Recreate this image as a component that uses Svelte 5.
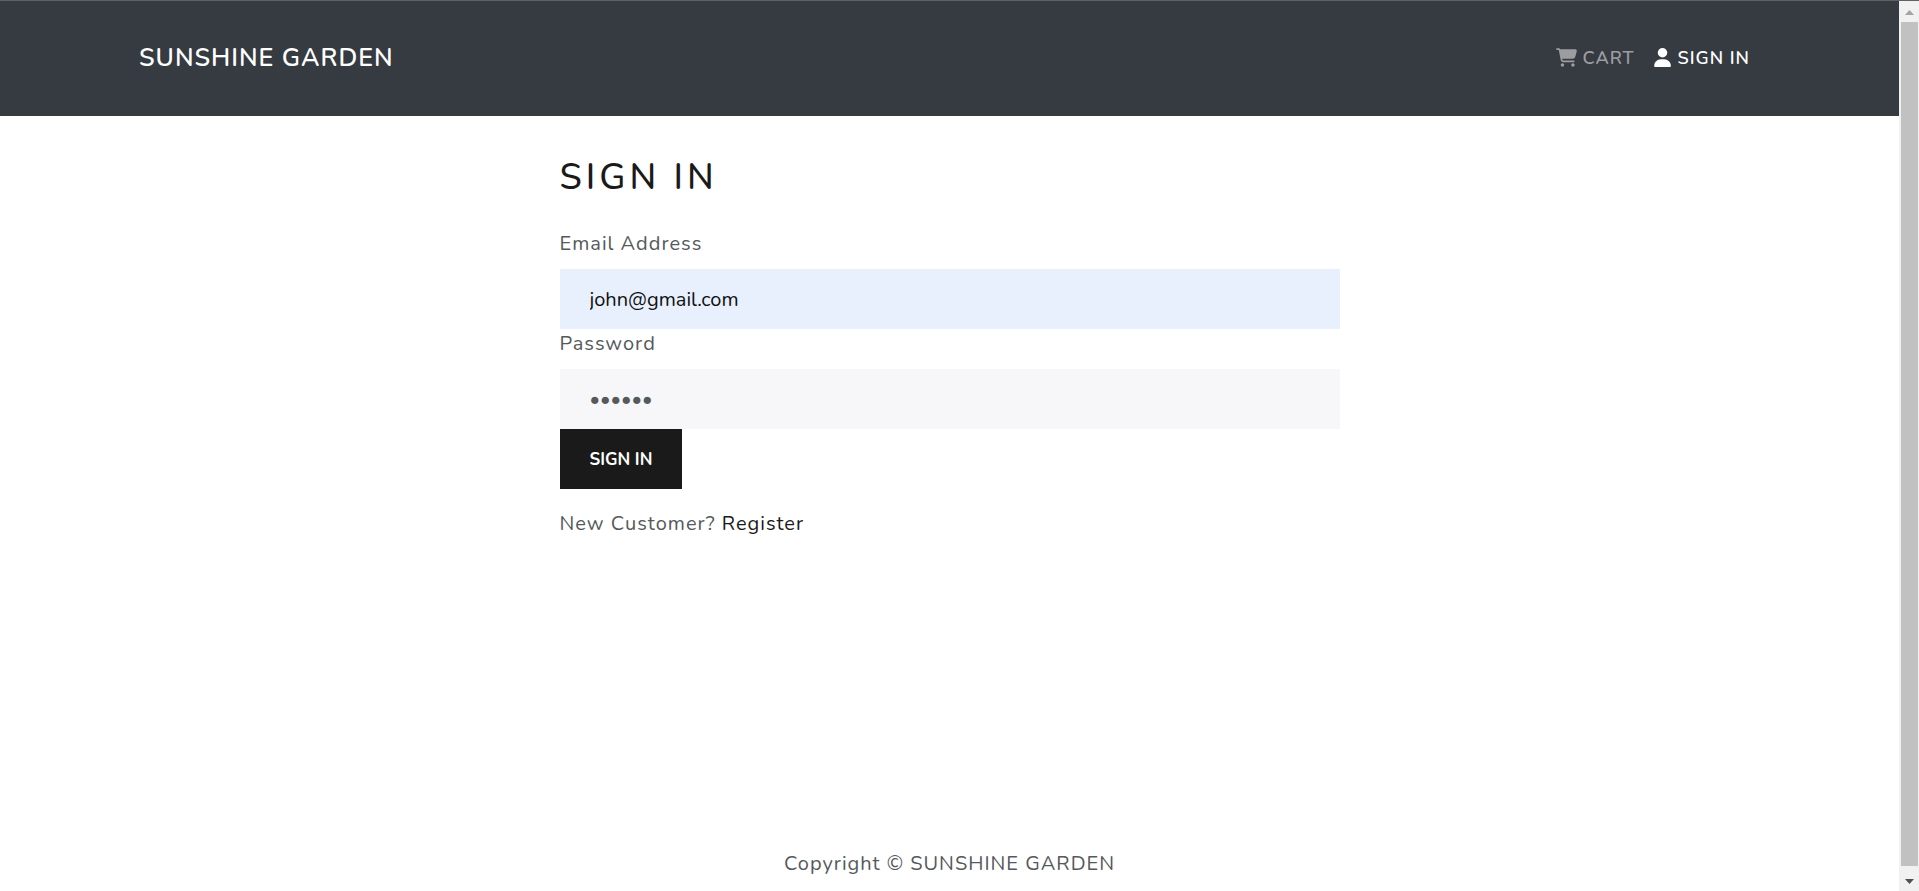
<script>
  const brand = 'SUNSHINE GARDEN';
  let email = $state('john@gmail.com');
  let password = $state('secret');
</script>

<div class="shell">
  <div class="page">
    <header>
      <a class="brand" href="#home">{brand}</a>
      <nav>
        <a href="#cart">
          <svg width="21" height="19" viewBox="0 0 576 512" aria-hidden="true"><path d="M0 24C0 10.700 10.700 0 24 0h45.500c22 0 41.500 12.800 50.600 32h411c26.300 0 45.500 25 38.600 50.400l-41 152.300c-8.500 31.400-37 53.300-69.500 53.300H170.700l5.400 28.500c2.200 11.300 12.100 19.500 23.600 19.500H488c13.300 0 24 10.700 24 24s-10.700 24-24 24H199.700c-34.600 0-64.300-24.600-70.700-58.500L77.400 54.500C76.700 50.700 73.400 48 69.500 48H24C10.700 48 0 37.300 0 24z" /><circle cx="176" cy="464" r="48" /><circle cx="464" cy="464" r="48" /></svg>
          <span>CART</span>
        </a>
        <a class="active" href="#login">
          <svg width="17" height="19" viewBox="0 0 448 512" aria-hidden="true"><circle cx="224" cy="128" r="128" /><path d="M178.300 304C79.800 304 0 383.800 0 482.300 0 498.700 13.300 512 29.700 512h388.600c16.400 0 29.700-13.300 29.700-29.700C448 383.800 368.200 304 269.700 304h-91.400z" /></svg>
          <span>SIGN IN</span>
        </a>
      </nav>
    </header>

    <main>
      <h1>SIGN IN</h1>
      <form onsubmit={(e) => e.preventDefault()}>
        <label for="email">Email Address</label>
        <input id="email" class="filled" type="email" bind:value={email} />
        <label for="password">Password</label>
        <input id="password" type="password" bind:value={password} />
        <button type="submit">SIGN IN</button>
      </form>
      <p>New Customer? <a href="#register">Register</a></p>
    </main>

    <footer>Copyright © {brand}</footer>
  </div>

  <div class="scrollbar" aria-hidden="true">
    <svg width="9" height="5" viewBox="0 0 9 5"><path d="M0 5 4.500 0 9 5z" fill="#a3a3a3" /></svg>
    <div class="thumb"></div>
    <svg width="9" height="5" viewBox="0 0 9 5"><path d="M0 0h9L4.500 5z" fill="#505050" /></svg>
  </div>
</div>

<style>
  :global(body) {
    margin: 0;
    background: #fff;
  }

  .shell {
    box-sizing: border-box;
    display: grid;
    grid-template-columns: 1fr 20px;
    min-height: 100vh;
    border-top: 1px solid #606366;
    font: 400 20px/30px Nunito, "Nunito Sans", Lato, sans-serif;
    letter-spacing: 1px;
    color: #55595c;
  }

  a {
    text-decoration: none;
  }

  .page {
    display: flex;
    flex-direction: column;
    min-width: 0;
  }

  header {
    display: flex;
    align-items: center;
    justify-content: space-between;
    padding: 39px 149px 39px 139px;
    background: #363a41;
    font-weight: 600;
  }

  .brand {
    font-size: 25px;
    line-height: 37px;
    color: #fff;
  }

  nav {
    display: flex;
    gap: 20px;
    padding-bottom: 2px;
  }

  nav a {
    display: flex;
    align-items: center;
    gap: 6px;
    font-size: 18px;
    color: #9b9da0;
  }

  nav a.active {
    color: #fff;
  }

  nav svg {
    fill: currentColor;
  }

  main {
    box-sizing: border-box;
    flex: 1;
    width: 100%;
    max-width: 780px;
    margin: 0 auto;
    padding-top: 41px;
  }

  h1 {
    margin: 0 0 31px;
    font-size: 36px;
    font-weight: 500;
    line-height: 41px;
    letter-spacing: 4px;
    color: #1a1a1a;
  }

  form {
    display: flex;
    flex-direction: column;
    align-items: stretch;
  }

  label {
    margin-bottom: 10px;
  }

  input {
    box-sizing: border-box;
    width: 100%;
    height: 60px;
    padding: 0 30px;
    border: 0;
    border-radius: 0;
    outline: 0;
    background: #f7f7f9;
    font: 400 20px/30px Nunito, "Nunito Sans", Lato, sans-serif;
    color: #55595c;
  }

  input.filled {
    background: #e8effd;
    color: #111;
  }

  button {
    align-self: flex-start;
    height: 60px;
    padding: 0 30px;
    border: 0;
    background: #1a1a1a;
    font: 700 17px/27px Nunito, "Nunito Sans", Lato, sans-serif;
    color: #fff;
    cursor: pointer;
  }

  p {
    margin: 20px 0 0;
  }

  p a {
    color: #1a1a1a;
  }

  footer {
    padding: 12px 20px;
    text-align: center;
  }

  .scrollbar {
    display: flex;
    flex-direction: column;
    align-items: center;
    gap: 7px;
    box-sizing: border-box;
    padding: 9px 0 7px;
    background: #f1f1f1;
  }

  .thumb {
    flex: 1;
    width: 17px;
    margin-bottom: 6px;
    background: #c1c1c1;
  }
</style>
